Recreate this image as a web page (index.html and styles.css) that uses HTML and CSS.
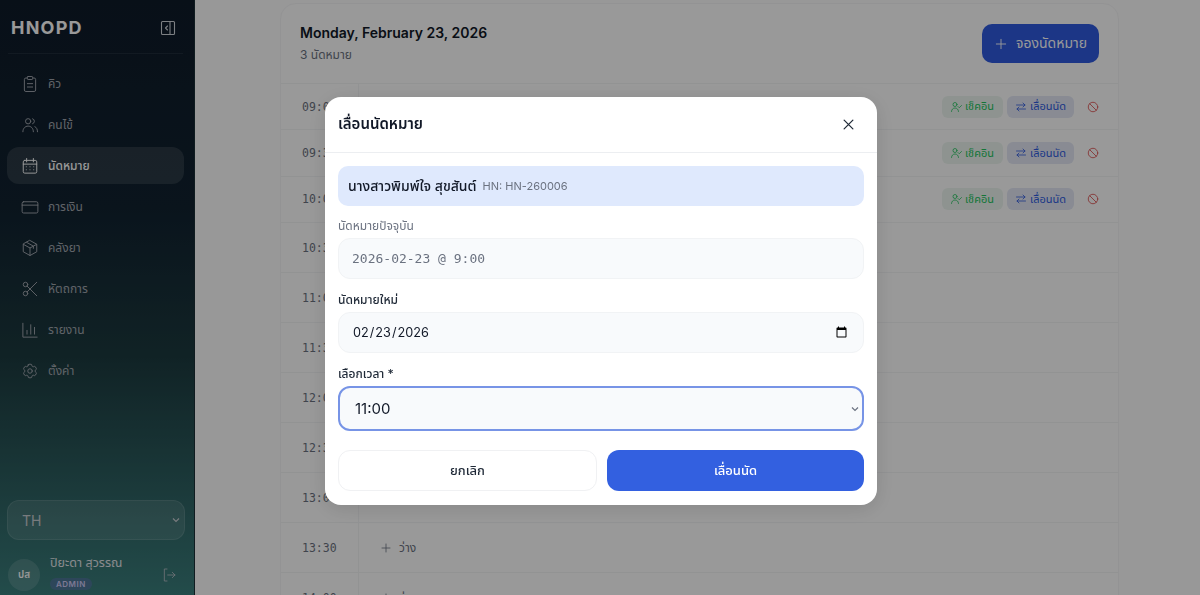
FILE: index.html
```html
<!DOCTYPE html>
<html lang="th">
<head>
<meta charset="utf-8">
<title>HNOPD</title>
<link rel="stylesheet" href="styles.css">
</head>
<body>
<div class="app">
  <aside class="sidebar">
    <div class="brand">
      <span class="logo">HNOPD</span>
      <svg class="collapse" viewBox="0 0 16 16"><rect x="1.5" y="1.5" width="13" height="13" rx="1"/><path d="M10 1.5v13M7.5 6 5.5 8l2 2"/></svg>
    </div>
    <nav class="nav">
      <a class="nav-item"><svg viewBox="0 0 24 24"><rect x="8.5" y="2" width="7" height="4" rx="1"/><path d="M16 4h1.5A2 2 0 0 1 19.500 6v14a2 2 0 0 1-2 2h-11a2 2 0 0 1-2-2V6a2 2 0 0 1 2-2H8M8.500 11.500h7M8.500 16h7"/></svg><span>คิว</span></a>
      <a class="nav-item"><svg viewBox="0 0 24 24"><circle cx="9.500" cy="7" r="3.500"/><path d="M2.500 21c0-4.500 3-7.500 7-7.500s7 3 7 7.500M15.500 3.700a3.500 3.500 0 0 1 0 6.600M18.500 14.200c2.200 1 3.500 3.400 3.500 6.800"/></svg><span>คนไข้</span></a>
      <a class="nav-item active"><svg viewBox="0 0 24 24"><rect x="3" y="4.500" width="18" height="17" rx="2"/><path d="M7.500 2v4.500M16.500 2v4.500M3 9.500h18M7 13h.01M12 13h.01M17 13h.01M7 17h.01M12 17h.01M17 17h.01"/></svg><span>นัดหมาย</span></a>
      <a class="nav-item"><svg viewBox="0 0 24 24"><rect x="1.500" y="5" width="21" height="15" rx="2"/><path d="M1.500 9.500h21"/></svg><span>การเงิน</span></a>
      <a class="nav-item"><svg viewBox="0 0 24 24"><path d="M12 2 21 7v10l-9 5-9-5V7zM3.300 7.200 12 12l8.700-4.800M12 12v10M7.500 4.500l9 5v3"/></svg><span>คลังยา</span></a>
      <a class="nav-item"><svg viewBox="0 0 24 24"><circle cx="6" cy="6" r="3"/><circle cx="6" cy="18" r="3"/><path d="M8.120 8.120 21 21M8.120 15.880 21 3"/></svg><span>หัตถการ</span></a>
      <a class="nav-item"><svg viewBox="0 0 24 24"><path d="M2.500 3v18.500h19M8 17.500v-5M13 17.500V5M18 17.500v-9"/></svg><span>รายงาน</span></a>
      <a class="nav-item"><svg viewBox="0 0 24 24"><path d="M9.594 3.940c.09-.542.56-.94 1.110-.94h2.593c.55 0 1.020.398 1.110.94l.213 1.281c.063.374.313.686.645.870.074.040.147.083.22.127.325.196.72.257 1.075.124l1.217-.456a1.125 1.125 0 0 1 1.370.49l1.296 2.247a1.125 1.125 0 0 1-.26 1.431l-1.003.827c-.293.241-.438.613-.43.992a7.723 7.723 0 0 1 0 .255c-.008.378.137.75.43.991l1.004.827c.424.35.534.955.26 1.430l-1.298 2.247a1.125 1.125 0 0 1-1.369.491l-1.217-.456c-.355-.133-.75-.072-1.076.124a6.470 6.470 0 0 1-.22.128c-.331.183-.581.495-.644.869l-.213 1.281c-.09.543-.56.94-1.110.94h-2.594c-.55 0-1.019-.398-1.110-.94l-.213-1.281c-.062-.374-.312-.686-.644-.87a6.520 6.520 0 0 1-.22-.127c-.325-.196-.72-.257-1.076-.124l-1.217.456a1.125 1.125 0 0 1-1.369-.49l-1.297-2.247a1.125 1.125 0 0 1 .26-1.431l1.004-.827c.292-.24.437-.613.43-.991a6.932 6.932 0 0 1 0-.255c.007-.38-.138-.751-.43-.992l-1.004-.827a1.125 1.125 0 0 1-.26-1.430l1.297-2.247a1.125 1.125 0 0 1 1.370-.491l1.216.456c.356.133.751.072 1.076-.124.072-.044.146-.086.22-.128.332-.183.582-.495.644-.869l.214-1.280Z"/><path d="M15 12a3 3 0 1 1-6 0 3 3 0 0 1 6 0Z"/></svg><span>ตั้งค่า</span></a>
    </nav>
    <div class="side-foot">
      <select class="lang"><option>TH</option><option>EN</option></select>
      <div class="user">
        <div class="avatar">ปส</div>
        <div class="user-info">
          <div class="user-name">ปิยะดา สุวรรณ</div>
          <span class="role">ADMIN</span>
        </div>
        <svg class="logout" viewBox="0 0 24 24"><path d="M9 3H5v18h4M10 12h11M17 8l4 4-4 4"/></svg>
      </div>
    </div>
  </aside>
  <main class="main">
    <section class="card">
      <header class="card-head">
        <div class="head-text">
          <h2 class="day">Monday, February 23, 2026</h2>
          <p class="count">3 นัดหมาย</p>
        </div>
        <button class="book"><svg viewBox="0 0 24 24"><path d="M12 4v16M4 12h16"/></svg>จองนัดหมาย</button>
      </header>
      <div class="row booked"><div class="time">09:00</div><div class="slot">
        <button class="chip green"><svg viewBox="0 0 24 24"><circle cx="10" cy="7" r="4"/><path d="M3 21c0-4 3-7 7-7s7 3 7 7M16 11l2.500 2.500L23 9"/></svg>เช็คอิน</button>
        <button class="chip blue"><svg viewBox="0 0 24 24"><path d="M3 8h17M16 4l4 4-4 4M21 16H4M8 12l-4 4 4 4"/></svg>เลื่อนนัด</button>
        <svg class="ban" viewBox="0 0 24 24"><circle cx="12" cy="12" r="9.500"/><path d="M5.300 5.300l13.400 13.400"/></svg>
      </div></div>
      <div class="row booked"><div class="time">09:30</div><div class="slot">
        <button class="chip green"><svg viewBox="0 0 24 24"><circle cx="10" cy="7" r="4"/><path d="M3 21c0-4 3-7 7-7s7 3 7 7M16 11l2.500 2.500L23 9"/></svg>เช็คอิน</button>
        <button class="chip blue"><svg viewBox="0 0 24 24"><path d="M3 8h17M16 4l4 4-4 4M21 16H4M8 12l-4 4 4 4"/></svg>เลื่อนนัด</button>
        <svg class="ban" viewBox="0 0 24 24"><circle cx="12" cy="12" r="9.500"/><path d="M5.300 5.300l13.400 13.400"/></svg>
      </div></div>
      <div class="row booked"><div class="time">10:00</div><div class="slot">
        <button class="chip green"><svg viewBox="0 0 24 24"><circle cx="10" cy="7" r="4"/><path d="M3 21c0-4 3-7 7-7s7 3 7 7M16 11l2.500 2.500L23 9"/></svg>เช็คอิน</button>
        <button class="chip blue"><svg viewBox="0 0 24 24"><path d="M3 8h17M16 4l4 4-4 4M21 16H4M8 12l-4 4 4 4"/></svg>เลื่อนนัด</button>
        <svg class="ban" viewBox="0 0 24 24"><circle cx="12" cy="12" r="9.500"/><path d="M5.300 5.300l13.400 13.400"/></svg>
      </div></div>
      <div class="row"><div class="time">10:30</div><div class="slot"></div></div>
      <div class="row"><div class="time">11:00</div><div class="slot"></div></div>
      <div class="row"><div class="time">11:30</div><div class="slot"></div></div>
      <div class="row"><div class="time">12:00</div><div class="slot"></div></div>
      <div class="row"><div class="time">12:30</div><div class="slot"></div></div>
      <div class="row"><div class="time">13:00</div><div class="slot"></div></div>
      <div class="row"><div class="time">13:30</div><div class="slot free"><svg viewBox="0 0 24 24"><path d="M12 4v16M4 12h16"/></svg>ว่าง</div></div>
      <div class="row"><div class="time">14:00</div><div class="slot free"><svg viewBox="0 0 24 24"><path d="M12 4v16M4 12h16"/></svg>ว่าง</div></div>
    </section>
  </main>
</div>

<div class="overlay">
  <div class="modal">
    <header class="modal-head">
      <h3>เลื่อนนัดหมาย</h3>
      <svg class="close" viewBox="0 0 24 24"><path d="M5 5l14 14M19 5 5 19"/></svg>
    </header>
    <div class="modal-body">
      <div class="patient"><strong>นางสาวพิมพ์ใจ สุขสันต์</strong><span>HN: HN-260006</span></div>
      <div class="field first">
        <label class="muted">นัดหมายปัจจุบัน</label>
        <div class="readonly">2026-02-23 @ 9:00</div>
      </div>
      <div class="field">
        <label>นัดหมายใหม่</label>
        <input class="input" type="date" value="2026-02-23">
      </div>
      <div class="field">
        <label>เลือกเวลา *</label>
        <select class="input timepick"><option>11:00</option><option>11:30</option></select>
      </div>
      <div class="actions">
        <button class="btn ghost">ยกเลิก</button>
        <button class="btn primary">เลื่อนนัด</button>
      </div>
    </div>
  </div>
</div>
</body>
</html>
```
FILE: styles.css
```css
* { box-sizing: border-box; }
html, body { margin: 0; height: 100%; overflow: hidden; }
body { font-family: Inter, "Noto Sans", "Noto Sans Thai", sans-serif; color: #111827; background: #fff; }
svg { fill: none; stroke: currentColor; stroke-linecap: round; stroke-linejoin: round; }
button, select, input { font-family: inherit; }

.app { display: flex; height: 595px; overflow: hidden; }

.sidebar {
  width: 195px; flex: none; display: flex; flex-direction: column; padding: 0 10px 0 7px;
  color: #d1d5db;
  background: linear-gradient(180deg, #0e1b29 0%, #112230 35%, #1c3a3f 60%, #3b7f7d 100%);
  border-right: 1px solid #1b3036;
}
.brand {
  height: 54px; display: flex; align-items: center; justify-content: space-between;
  padding: 2px 7px 0 3px; margin: 0 1px; border-bottom: 1px solid rgba(255,255,255,.07);
}
.logo { font-size: 18px; font-weight: 700; letter-spacing: 1.2px; color: #fff; }
.collapse { width: 16px; height: 16px; stroke-width: 1.1; color: #d1d5db; }
.nav { display: flex; flex-direction: column; gap: 4px; padding-top: 11px; }
.nav-item {
  height: 37px; display: flex; align-items: center; gap: 9px; padding-left: 14px;
  border-radius: 12px; font-size: 12px; color: #a0a6ae;
}
.nav-item svg { width: 18px; height: 18px; stroke-width: 1.3; flex: none; }
.nav-item.active { background: rgba(255,255,255,.11); color: #fff; font-weight: 500; }
.side-foot { margin-top: auto; }
.lang {
  appearance: none; width: 178px; height: 40px; border-radius: 12px; padding-left: 14px; font-size: 14px;
  color: #c9cdd2; border: 1px solid rgba(255,255,255,.1);
  background: rgba(255,255,255,.1) url("data:image/svg+xml,%3Csvg xmlns='http://www.w3.org/2000/svg' viewBox='0 0 10 10'%3E%3Cpath d='M2 3.500l3 3 3-3' fill='none' stroke='%23c9cdd2' stroke-width='1.200'/%3E%3C/svg%3E") no-repeat right 3px center / 10px;
}
.user { display: flex; align-items: center; gap: 10px; height: 55px; padding-top: 14px; margin-left: 1px; }
.avatar {
  width: 32px; height: 32px; border-radius: 50%; flex: none; display: flex; align-items: center; justify-content: center;
  background: rgba(255,255,255,.13); color: #fff; font-size: 10px; font-weight: 600;
}
.user-info { flex: 1; min-width: 0; margin-top: -3px; }
.user-name { font-size: 12.500px; line-height: 16px; color: #e5e7eb; }
.role {
  display: inline-block; font-size: 8px; line-height: 12px; letter-spacing: .5px; padding: 0 6px; border-radius: 8px;
  background: rgba(124,107,220,.3); color: #cfc8f5; font-weight: 600;
}
.logout { width: 16px; height: 16px; stroke-width: 1.3; color: #b6bcc4; margin-right: 7px; }

.main { flex: 1; min-width: 0; padding: 3px 81px 0 85px; background: #fdfdfd; }
.card { border: 1px solid #f6f6f7; border-radius: 16px 16px 0 0; background: #fff; }
.card-head { height: 80px; display: flex; align-items: center; justify-content: space-between; padding: 0 19px; border-bottom: 1px solid #f4f5f6; }
.head-text { padding-bottom: 2px; }
.day { margin: 0 0 4px; font-size: 14px; line-height: 20px; font-weight: 600; }
.count { margin: 0; font-size: 12px; line-height: 16px; color: #6b7280; }
.book {
  height: 39px; width: 117px; border: 0; border-radius: 10px; display: flex; align-items: center; justify-content: center; gap: 8px;
  background: #2f5be0; color: #fff; font-size: 14px;
}
.book svg { width: 14px; height: 14px; stroke-width: 1.6; }
.row { height: 50px; display: flex; border-bottom: 1px solid #f4f5f6; }
.row.booked { height: 46.400px; }
.time { width: 78px; flex: none; border-right: 1px solid #f4f5f6; padding-left: 21px; display: flex; align-items: center; font: 11.500px "DejaVu Sans Mono", monospace; color: #6b7280; }
.slot { flex: 1; display: flex; align-items: center; justify-content: flex-end; gap: 4px; padding-right: 19px; }
.slot.free { justify-content: flex-start; padding-left: 21px; gap: 7px; font-size: 12px; color: #6b7280; }
.slot.free svg { width: 12px; height: 12px; stroke-width: 1.6; }
.chip { height: 22px; border: 0; border-radius: 6px; display: flex; align-items: center; gap: 3px; font-size: 11px; padding: 0 8px; }
.chip svg { width: 12px; height: 12px; stroke-width: 1.6; flex: none; }
.chip.green { width: 61px; background: #edf6f0; color: #22c55e; }
.chip.blue { width: 67px; background: #e4e8f6; color: #2f5be0; }
.ban { width: 12px; height: 12px; margin-left: 9px; stroke-width: 1.800; color: #e05a5a; }

.overlay { position: fixed; inset: 0; background: rgba(0,0,0,.4); backdrop-filter: blur(.6px); display: flex; align-items: flex-start; justify-content: center; padding: 97px 0 0 2px; }
.modal { width: 552px; height: 408px; background: #fff; border-radius: 16px; box-shadow: 0 4px 20px rgba(0,0,0,.12); }
.modal-head { height: 56px; display: flex; align-items: center; justify-content: space-between; padding: 0 21px 0 13px; border-bottom: 1px solid #eceef1; }
.modal-head h3 { margin: 0; font-size: 15px; font-weight: 600; }
.close { width: 15px; height: 15px; stroke-width: 2; color: #1f2937; }
.modal-body { padding: 13px 13px 0; display: flex; flex-direction: column; }
.patient { height: 40px; border-radius: 10px; background: #dfe9fd; display: flex; align-items: center; gap: 6px; padding: 0 10px; }
.patient strong { font-size: 14px; font-weight: 500; }
.patient span { font-size: 11px; color: #6b7280; }
.field { margin-top: 13px; display: flex; flex-direction: column; }
.field.first { margin-top: 12px; }
.field label { font-size: 12px; line-height: 16px; font-weight: 500; margin-bottom: 4px; color: #1f2937; }
.field label.muted { font-weight: 400; color: #6b7280; }
.readonly { height: 41px; border: 1px solid #f1f3f5; border-radius: 12px; background: #f8fafc; display: flex; align-items: center; padding: 0 13px; font: 13px "DejaVu Sans Mono", monospace; color: #6b7280; }
.input { width: 100%; height: 41px; border: 1px solid #f1f3f5; border-radius: 12px; background: #f8fafc; padding: 0 13px; font-size: 12.700px; color: #111827; }
.timepick {
  appearance: none; height: 45px; border: 2px solid #7794e6; padding-left: 15px; font-size: 15px;
  background: #f8fafc url("data:image/svg+xml,%3Csvg xmlns='http://www.w3.org/2000/svg' viewBox='0 0 10 10'%3E%3Cpath d='M2 3.500l3 3 3-3' fill='none' stroke='%236b7280' stroke-width='1.200'/%3E%3C/svg%3E") no-repeat right 2px center / 10px;
}
.actions { margin-top: 19px; display: flex; gap: 10px; }
.btn { flex: 1; height: 41px; border-radius: 12px; font-size: 13px; font-weight: 500; }
.btn.ghost { background: #fff; border: 1px solid #f0f1f3; color: #1f2937; }
.btn.primary { background: #3360e0; border: 0; color: #fff; }
```
